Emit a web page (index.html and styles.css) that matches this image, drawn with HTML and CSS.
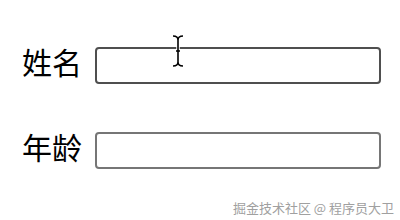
FILE: index.html
```html
<!DOCTYPE html>
<html lang="zh">
<head>
<meta charset="utf-8">
<link rel="stylesheet" href="styles.css">
</head>
<body>
<div class="form">
  <div class="row">
    <label class="label">姓名</label>
    <div class="field hover"></div>
  </div>
  <div class="row">
    <label class="label">年龄</label>
    <div class="field"></div>
  </div>
</div>
<div class="watermark">掘金技术社区 @ 程序员大卫</div>
<svg class="cursor" width="14" height="34" viewBox="0 0 14 34">
  <path d="M2 2 Q7 2 7 6 Q7 2 12 2 M7 6 L7 28 M2 32 Q7 32 7 28 Q7 32 12 32 M5 17 L9 17" fill="none" stroke="#fff" stroke-width="3.5" stroke-linecap="round"/>
  <path d="M2 2 Q7 2 7 6 Q7 2 12 2 M7 6 L7 28 M2 32 Q7 32 7 28 Q7 32 12 32 M5 17 L9 17" fill="none" stroke="#000" stroke-width="1.6"/>
</svg>
</body>
</html>
```
FILE: styles.css
```css
html, body {
  margin: 0;
  padding: 0;
  background: #fff;
  width: 400px;
  height: 220px;
  overflow: hidden;
  position: relative;
  font-family: "Noto Sans CJK SC", "Noto Sans", sans-serif;
}
.form {
  display: flex;
  flex-direction: column;
  gap: 48px;
  padding: 47px 0 0 22px;
}
.row {
  display: flex;
  align-items: flex-start;
  gap: 13px;
}
.label {
  font-size: 30px;
  line-height: 29px;
  color: #000;
  width: 60px;
  flex: none;
  white-space: nowrap;
}
.field {
  width: 282px;
  height: 33px;
  border: 2px solid #767676;
  border-radius: 4px;
  background: #fff;
}
.field.hover {
  border-color: #4f4f4f;
}
.watermark {
  position: absolute;
  right: 6px;
  top: 199px;
  font-size: 13px;
  line-height: 18px;
  color: #a0a0a0;
}
.cursor {
  position: absolute;
  left: 171px;
  top: 34px;
}
```
